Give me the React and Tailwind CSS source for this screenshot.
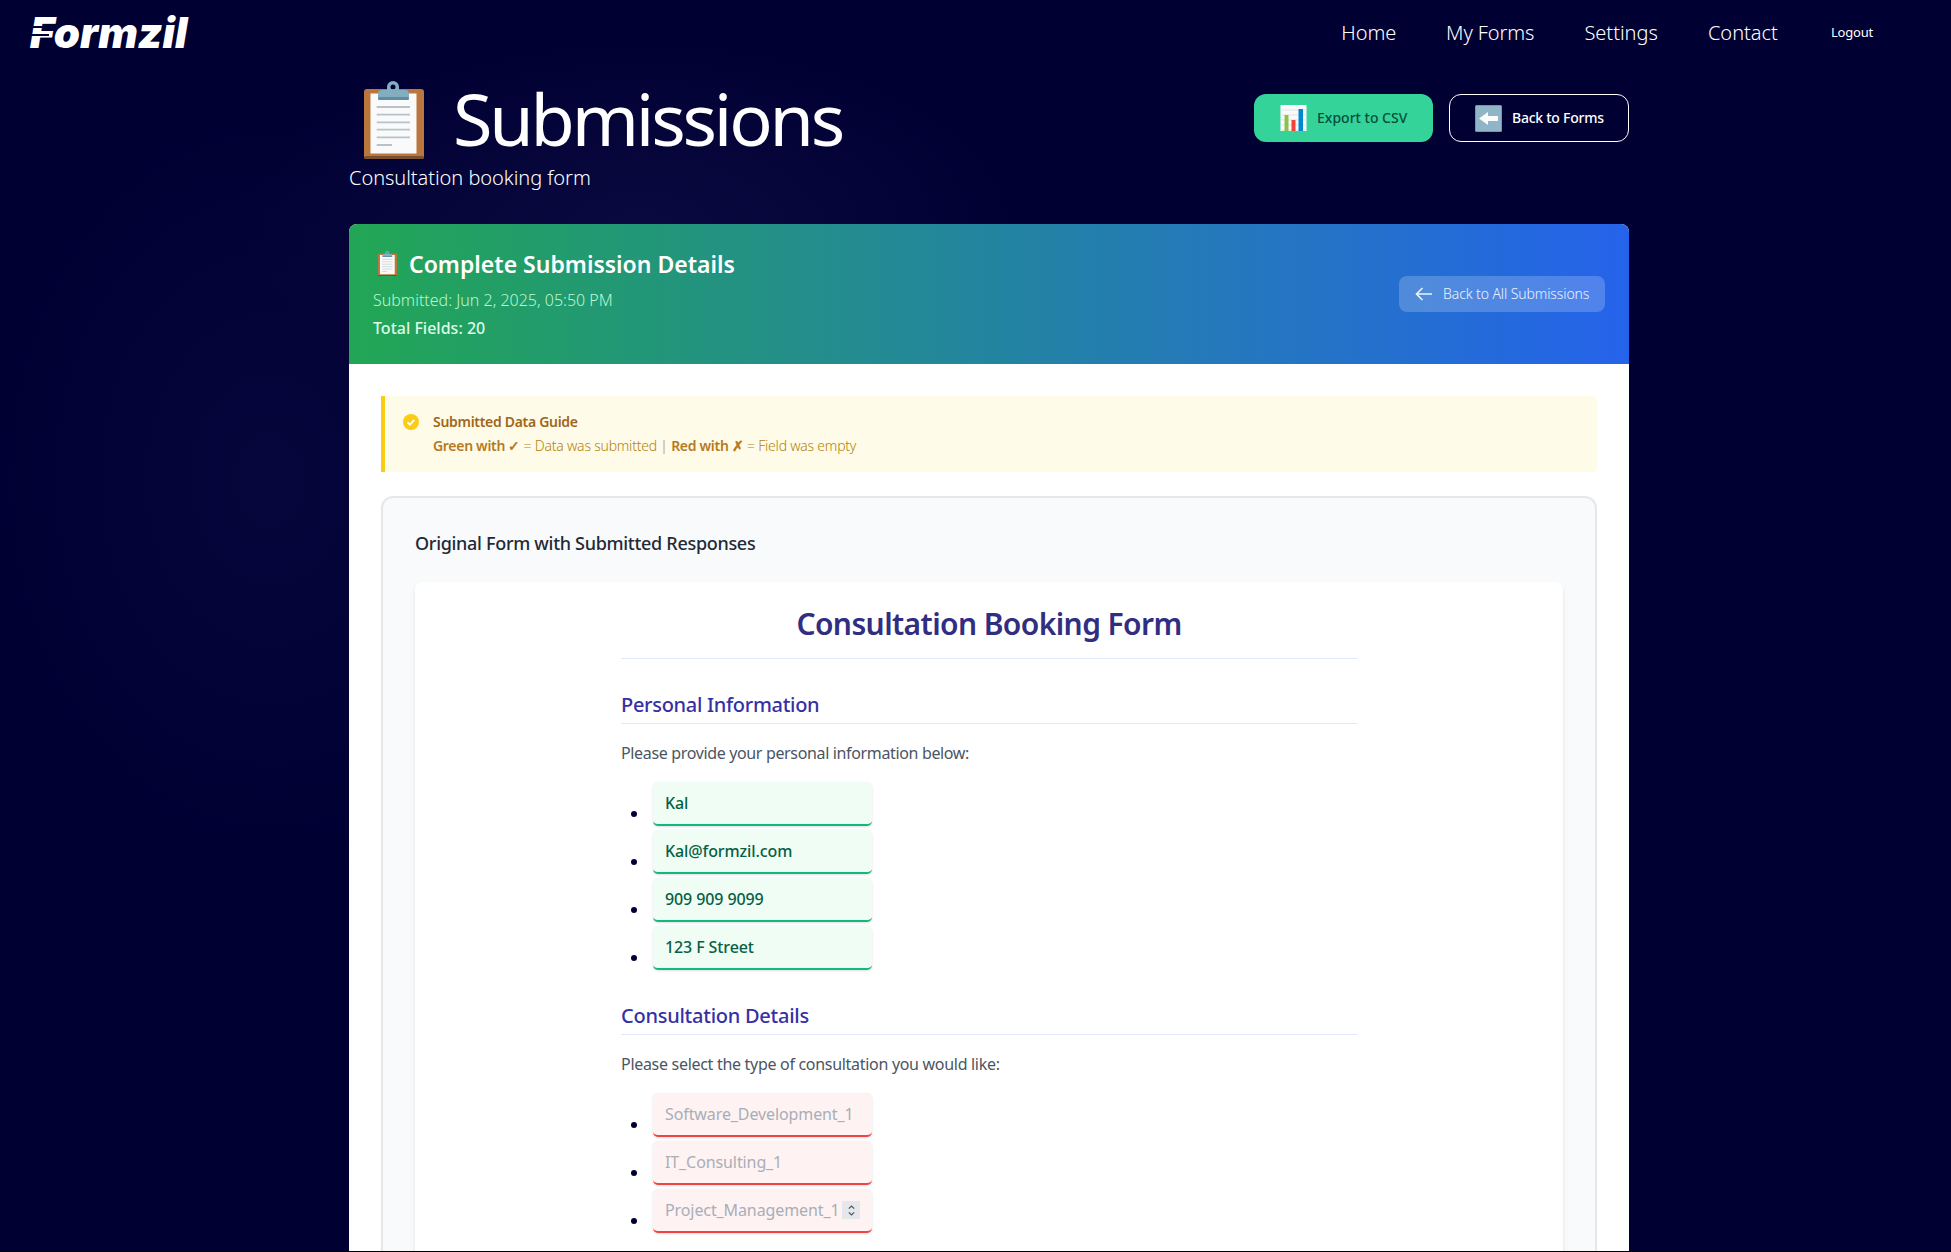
const font = 'font-["Noto_Sans",sans-serif]'

function Clipboard({ className }) {
  return (
    <svg viewBox="0 0 60 78" className={className}>
      <rect x="0" y="8" width="60" height="70" rx="3" fill="#b9773d" />
      <rect x="0" y="75" width="60" height="3" rx="1.5" fill="#7a5130" />
      <rect x="6.5" y="12.5" width="46" height="60" fill="#fafafa" />
      <path d="M12.7 26H46M12.7 33.7H46M12.7 41.3H46M12.7 48.7H46M12.7 56.3H46M12.7 64H28" stroke="#b6c3ca" strokeWidth="1.8" />
      <path fillRule="evenodd" d="M23 9V6a6 6 0 0 1 12 0v3h6a4 4 0 0 1 4 4v4a2 2 0 0 1-2 2H16a2 2 0 0 1-2-2v-4a4 4 0 0 1 4-4zM29 3.5a2.5 2.5 0 1 0 0 5 2.5 2.5 0 0 0 0-5z" fill="#82aec0" />
      <rect x="14" y="16" width="31" height="3" rx="1.5" fill="#5f8d9f" />
    </svg>
  )
}

function BarChart({ className }) {
  return (
    <svg viewBox="0 0 26 26" className={className}>
      <rect x="0" y="0" width="26" height="26" fill="#fafafa" />
      <path d="M0 5h26M0 10h26M0 15h26M0 20h26M0 25h26" stroke="#dfe3e6" strokeWidth="1" />
      <rect x="4" y="10" width="4" height="16" fill="#8bc34a" />
      <rect x="11" y="15" width="4" height="11" fill="#f44336" />
      <rect x="18" y="4" width="4.5" height="22" fill="#0288d1" />
    </svg>
  )
}

function BackEmoji({ className }) {
  return (
    <svg viewBox="0 0 27 27" className={className}>
      <rect width="27" height="27" rx="1.5" fill="#6f9aad" />
      <rect x="1" y="1" width="25" height="25" fill="#90b5c6" />
      <path d="M4 13.5L13 7v4h10v5H13v4z" fill="#fafafa" />
    </svg>
  )
}

function Field({ label, ok, spinner }) {
  return (
    <li className="h-[48px] list-none relative pl-[32px]">
      <span className="absolute left-[10px] top-[29px] w-[6px] h-[6px] rounded-full bg-[#000033]" />
      <div
        className={`w-[219px] h-[44px] rounded-[5px] border-b-[2px] shadow-sm flex items-center justify-between pl-[12px] pr-[12px] text-[16px] tracking-[-0.1px] ${
          ok
            ? 'bg-[#f0fdf4] border-[#10b981] text-[#065f46] font-medium'
            : 'bg-[#fef2f2] border-[#ef4444] text-[#a8aeb8]'
        }`}
      >
        <span className="whitespace-nowrap">{label}</span>
        {spinner && (
          <span className="w-[18px] h-[18px] bg-[#e5e7eb] flex items-center justify-center">
            <svg viewBox="0 0 10 14" className="w-[9px] h-[13px]" fill="none" stroke="#4b5563" strokeWidth="1.3">
              <path d="M2 5l3-3 3 3M2 9l3 3 3-3" />
            </svg>
          </span>
        )}
      </div>
    </li>
  )
}

export default function App() {
  return (
    <div className={`${font} h-[1252px] overflow-hidden bg-[#000033] bg-[radial-gradient(ellipse_300px_400px_at_270px_480px,#0b0b4488,transparent),radial-gradient(ellipse_400px_200px_at_640px_230px,#12124c88,transparent)] border-b border-black`}>
      <nav className="h-[65px] flex items-center justify-between pl-[30px] pr-[78px]">
        <div className="relative text-[42px] leading-none font-black italic text-white font-['Inter',sans-serif]">
          Formzil
          <span className="absolute left-0 top-[14px] w-[26px] h-[2px] bg-[#000033]" />
          <span className="absolute left-0 top-[22px] w-[19px] h-[2px] bg-[#000033]" />
        </div>
        <div className="flex items-center font-light text-white">
          <a className="text-[20px] tracking-[-0.1px]">Home</a>
          <a className="text-[20px] tracking-[-0.1px] ml-[50px]">My Forms</a>
          <a className="text-[20px] ml-[50px]">Settings</a>
          <a className="text-[20px] ml-[50px]">Contact</a>
          <a className="text-[13px] font-normal tracking-[-0.2px] ml-[53px]">Logout</a>
        </div>
      </nav>

      <main className="w-[1280px] ml-[349px]">
        <div className="flex items-start justify-between h-[159px] pt-[10px]">
          <div>
            <div className="flex items-center h-[90px] pl-[15px]">
              <Clipboard className="w-[60px] h-[78px]" />
              <h1 className="ml-[29px] -mt-[5px] text-[72px] leading-none tracking-[-3.2px] text-white">Submissions</h1>
            </div>
            <p className="text-[20px] leading-[26px] font-light tracking-[-0.05px] text-white">Consultation booking form</p>
          </div>
          <div className="flex gap-[16px] mt-[19px]">
            <button className="w-[179px] h-[48px] rounded-[12px] bg-[#34d399] text-[#064e3b] text-[14px] font-medium flex items-center pl-[26px] gap-[10px]">
              <BarChart className="w-[27px] h-[26px]" />
              <span className="-mt-[2px]">Export to CSV</span>
            </button>
            <button className="w-[180px] h-[48px] rounded-[12px] border border-white text-white text-[14px] font-medium tracking-[-0.25px] flex items-center pl-[25px] gap-[10px]">
              <BackEmoji className="w-[27px] h-[27px]" />
              <span className="-mt-[2px]">Back to Forms</span>
            </button>
          </div>
        </div>

        <div className="rounded-t-[8px] overflow-hidden bg-white">
          <div className="h-[140px] flex items-center justify-between px-[24px] bg-linear-to-r/srgb from-[#22a655] to-[#2563eb]">
            <div>
              <div className="flex items-center h-[30px] pl-[3px]">
                <Clipboard className="w-[23px] h-[25px]" />
                <h2 className="ml-[10px] mt-[1px] text-[23px] font-semibold text-white">Complete Submission Details</h2>
              </div>
              <p className="mt-[9px] text-[16px] leading-[24px] font-light text-[#bbf7d0]">Submitted: Jun 2, 2025, 05:50 PM</p>
              <p className="mt-[4px] text-[16px] leading-[24px] font-medium text-[#dcfce7]">Total Fields: 20</p>
            </div>
            <button className="w-[206px] h-[36px] rounded-[8px] bg-white/20 text-white/90 text-[14px] tracking-[-0.1px] font-light flex items-center pl-[16px] gap-[10px]">
              <svg viewBox="0 0 18 14" className="w-[18px] h-[14px]" fill="none" stroke="currentColor" strokeWidth="1.6">
                <path d="M17 7H1.5M7.5 1L1.5 7l6 6" />
              </svg>
              <span className="-mt-[2px]">Back to All Submissions</span>
            </button>
          </div>

          <div className="p-[32px] pb-0">
            <div className="h-[76px] bg-[#fefce8] border-l-[4px] border-[#facc15] rounded-r-[4px] flex items-start pl-[18px] pt-[14px]">
              <svg viewBox="0 0 16 16" className="w-[16px] h-[16px] mt-[4px] shrink-0">
                <circle cx="8" cy="8" r="8" fill="#facc15" />
                <path d="M4.5 8.3l2.4 2.3 4.4-4.8" fill="none" stroke="#fff" strokeWidth="1.8" />
              </svg>
              <div className="ml-[14px] text-[14px] leading-[24px]">
                <p className="font-semibold tracking-[-0.3px] text-[#a0661c]">Submitted Data Guide</p>
                <p className="font-light tracking-[-0.22px] text-[#b7800a]">
                  <b className="font-semibold tracking-[-0.3px] text-[#b7791f]">Green with ✓</b> = Data was submitted | <b className="font-semibold tracking-[-0.3px] text-[#b7791f]">Red with ✗</b> = Field was empty
                </p>
              </div>
            </div>

            <div className="mt-[24px] rounded-t-[12px] border-x-[2px] border-t-[2px] border-[#e5e7eb] bg-[#f9fafb] px-[32px] pt-[31px] h-[800px]">
              <h3 className="text-[18px] leading-[28px] font-medium tracking-[-0.3px] text-[#1f2937]">Original Form with Submitted Responses</h3>
              <div className="mt-[25px] bg-white rounded-[8px] shadow-md h-[700px] pt-[22px]">
                <div className="w-[736px] mx-auto">
                  <h1 className="h-[55px] text-[30px] leading-[40px] font-semibold tracking-[-0.6px] text-center text-[#312e81] border-b border-[#e0e7ff]">Consultation Booking Form</h1>
                  <h2 className="mt-[29px] h-[36px] text-[20px] leading-[34px] font-medium tracking-[-0.3px] text-[#3730a3] border-b border-[#e0e7ff]">Personal Information</h2>
                  <p className="mt-[17px] text-[16px] leading-[24px] tracking-[-0.35px] text-[#4b5563]">Please provide your personal information below:</p>
                  <ul className="mt-[17px]">
                    <Field label="Kal" ok />
                    <Field label="Kal@formzil.com" ok />
                    <Field label="909 909 9099" ok />
                    <Field label="123 F Street" ok />
                  </ul>
                  <h2 className="mt-[25px] h-[36px] text-[20px] leading-[34px] font-medium tracking-[-0.25px] text-[#3730a3] border-b border-[#e0e7ff]">Consultation Details</h2>
                  <p className="mt-[17px] text-[16px] leading-[24px] tracking-[-0.3px] text-[#4b5563]">Please select the type of consultation you would like:</p>
                  <ul className="mt-[17px]">
                    <Field label="Software_Development_1" />
                    <Field label="IT_Consulting_1" />
                    <Field label="Project_Management_1" spinner />
                  </ul>
                </div>
              </div>
            </div>
          </div>
        </div>
      </main>
    </div>
  )
}
